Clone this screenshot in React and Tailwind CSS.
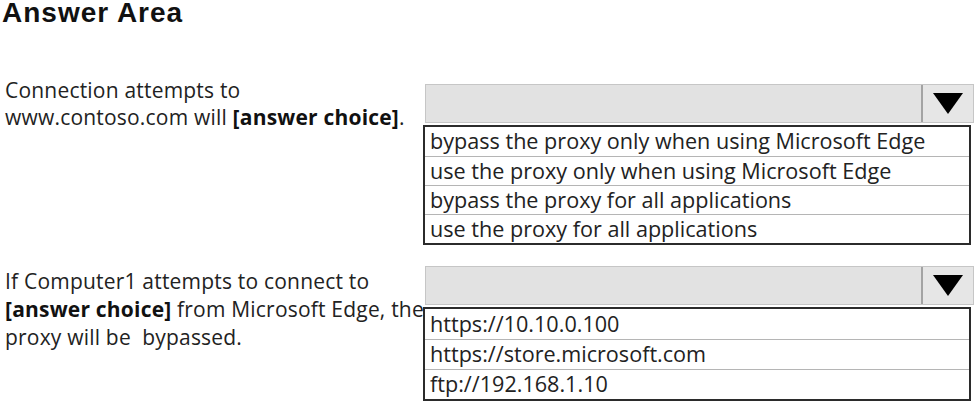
import { Fragment } from 'react';

const SANS = { fontFamily: '"Open Sans", "Noto Sans", sans-serif' };

// ── Fake dropdown: grey closed bar + opened list of choices ──
function Dropdown({ options, rowClass }) {
  return (
    <div className="flex flex-col">
      <div className="ml-[2px] w-[549px] h-[39px] flex bg-[#e2e2e2] border border-[#c6c6c6]">
        <div className="flex-1 border-r-2 border-[#a3a3a3]" />
        <div className="w-[50px] flex items-center justify-center bg-[#e6e6e6]">
          <svg width="30" height="21" viewBox="0 0 30 21">
            <polygon points="0,0 30,0 15,21" fill="#000" />
          </svg>
        </div>
      </div>
      <div className="mt-[2px] w-[548px] border-2 border-[#2b2b2b] bg-white">
        {options.map((o, i) => (
          <div
            key={i}
            className={`${rowClass} flex items-center pl-[5px] text-[21.6px] text-[#222] whitespace-nowrap ${i > 0 ? 'border-t border-[#b5b5b5]' : ''}`}
          >
            {o}
          </div>
        ))}
      </div>
    </div>
  );
}

export default function App() {
  return (
    <div className="w-[974px] h-[406px] bg-white overflow-hidden" style={SANS}>
      <h1
        className="text-[28px] leading-[26px] font-bold tracking-[1px] text-[#111] pl-[2px]"
        style={{ fontFamily: '"Liberation Sans", Arial, sans-serif' }}
      >
        Answer Area
      </h1>

      {/* ── Question 1 ── */}
      <div className="flex mt-[51px]">
        <div className="w-[423px] shrink-0 pl-[5px] text-[21px] leading-[27px] tracking-[0.2px] text-[#222] whitespace-nowrap">
          Connection attempts to
          <br />
          www.contoso.com will <span className="font-bold text-[#111]">[answer choice]</span>.
        </div>
        <div className="pt-[7px]">
          <Dropdown
            rowClass="h-[29px]"
            options={[
              'bypass the proxy only when using Microsoft Edge',
              'use the proxy only when using Microsoft Edge',
              'bypass the proxy for all applications',
              'use the proxy for all applications',
            ]}
          />
        </div>
      </div>

      {/* ── Question 2 ── */}
      <div className="flex mt-[21px]">
        <div className="w-[423px] shrink-0 pt-[1px] pl-[5px] text-[21px] leading-[28px] tracking-[0.2px] text-[#222] whitespace-nowrap">
          {[
            <Fragment key="a">If Computer1 attempts to connect to</Fragment>,
            <Fragment key="b">
              <span className="font-bold text-[#111]">[answer choice]</span> from Microsoft Edge, the
            </Fragment>,
            <Fragment key="c">proxy will be&nbsp; bypassed.</Fragment>,
          ].map((line, i) => (
            <div key={i}>{line}</div>
          ))}
        </div>
        <div>
          <Dropdown
            rowClass="h-[30px]"
            options={['https://10.10.0.100', 'https://store.microsoft.com', 'ftp://192.168.1.10']}
          />
        </div>
      </div>
    </div>
  );
}
